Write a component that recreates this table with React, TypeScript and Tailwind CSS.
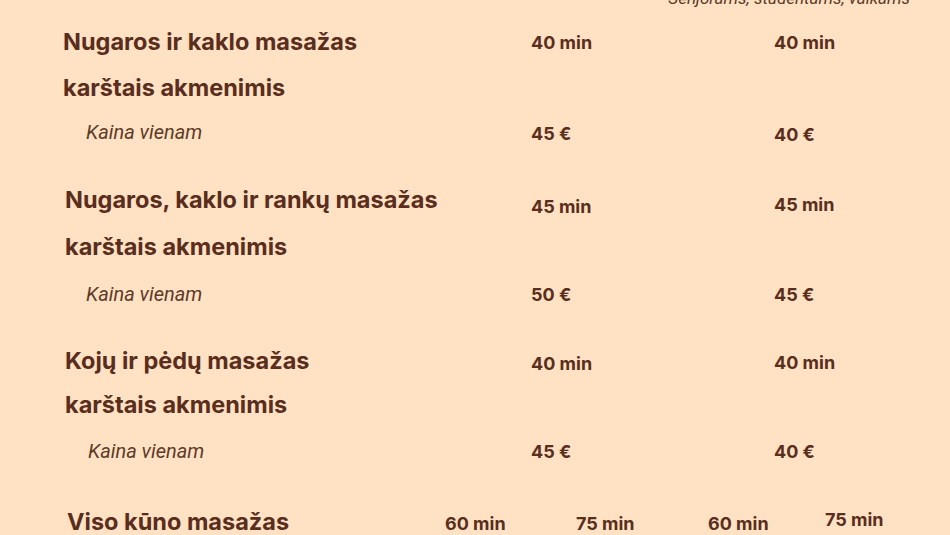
import React from "react";

const inter = { fontFamily: "Inter, 'Noto Sans', sans-serif" };

export default function App() {
  const h = "text-[23.5px] font-bold text-[#5a2d1c]";
  const v = "text-[18px] font-bold text-[#5a2d1c]";
  const k = "text-[20px] italic text-[#5e3a29] font-['Roboto',sans-serif]";
  return (
    <div className="w-[950px] h-[535px] overflow-hidden bg-[#ffe2c3] font-['Inter',sans-serif]" style={inter}>
      <div className="-mt-[13px] h-[22px] leading-[22px] pr-[40px] text-right text-[17px] italic text-[#5e3a29] font-['Roboto',sans-serif]">
        Senjorams, studentams, vaikams
      </div>

      <div className="pl-[63px]">
        {/* Section 1 */}
        <div className="mt-[11px] grid grid-cols-[468px_243px_1fr] h-[44px] items-center">
          <div className={h}>Nugaros ir kaklo masažas</div>
          <div className={v}>40 min</div>
          <div className={v}>40 min</div>
        </div>
        <div className="mt-[2px] grid grid-cols-[468px_243px_1fr] h-[44px] items-center">
          <div className={h}>karštais akmenimis</div>
        </div>
        <div className="grid grid-cols-[468px_243px_1fr] h-[44px] items-center">
          <div className={"pl-[23px] " + k}>Kaina vienam</div>
          <div className={v + " translate-y-[1px]"}>45 €</div>
          <div className={v + " translate-y-[2px]"}>40 €</div>
        </div>

        {/* Section 2 */}
        <div className="mt-[24px] grid grid-cols-[468px_243px_1fr] h-[44px] items-center">
          <div className={"pl-[2px] " + h}>Nugaros, kaklo ir rankų masažas</div>
          <div className={v + " translate-y-[6px]"}>45 min</div>
          <div className={v + " translate-y-[4px]"}>45 min</div>
        </div>
        <div className="mt-[3px] grid grid-cols-[468px_243px_1fr] h-[44px] items-center">
          <div className={"pl-[2px] " + h}>karštais akmenimis</div>
        </div>
        <div className="mt-[3px] grid grid-cols-[468px_243px_1fr] h-[44px] items-center">
          <div className={"pl-[23px] " + k}>Kaina vienam</div>
          <div className={v}>50 €</div>
          <div className={v}>45 €</div>
        </div>

        {/* Section 3 */}
        <div className="mt-[23px] grid grid-cols-[468px_243px_1fr] h-[44px] items-center">
          <div className={"pl-[2px] " + h}>Kojų ir pėdų masažas</div>
          <div className={v + " translate-y-[2px]"}>40 min</div>
          <div className={v + " translate-y-[1px]"}>40 min</div>
        </div>
        <div className="grid grid-cols-[468px_243px_1fr] h-[44px] items-center">
          <div className={"pl-[2px] " + h}>karštais akmenimis</div>
        </div>
        <div className="mt-[2px] grid grid-cols-[468px_243px_1fr] h-[44px] items-center">
          <div className={"pl-[25px] " + k}>Kaina vienam</div>
          <div className={v}>45 €</div>
          <div className={v}>40 €</div>
        </div>
      </div>

      {/* Bottom row */}
      <div className="mt-[27px] pl-[67px] flex h-[44px] items-center">
        <div className={"w-[378px] " + h}>Viso kūno masažas</div>
        <div className={"w-[131px] " + v + " translate-y-[1px]"}>60 min</div>
        <div className={"w-[132px] " + v + " translate-y-[1px]"}>75 min</div>
        <div className={"w-[117px] " + v + " translate-y-[1px]"}>60 min</div>
        <div className={v + " -translate-y-[3px]"}>75 min</div>
      </div>
    </div>
  );
}
